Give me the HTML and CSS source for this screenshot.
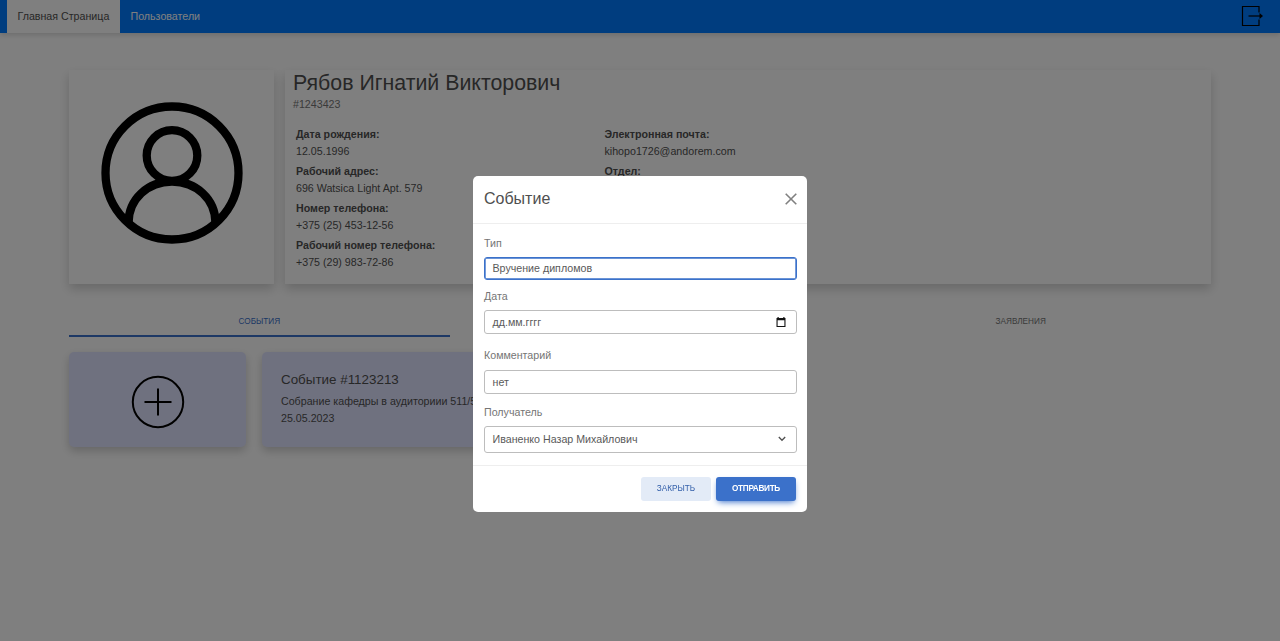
FILE: index.html
```html
<!DOCTYPE html>
<html lang="ru">
<head>
<meta charset="utf-8">
<title>Главная Страница</title>
<link rel="stylesheet" href="styles.css">
</head>
<body>
<header class="navbar">
  <nav class="nav-links">
    <a class="nav-link active">Главная Страница</a>
    <a class="nav-link">Пользователи</a>
  </nav>
  <svg class="logout" viewBox="0 0 22 22" fill="none" stroke="#000" stroke-width="1.2"><path d="M18 7.500V1.500H1.500v19H18V14.500"/><path d="M7.500 11H20"/><path fill="#000" stroke="none" d="M18.500 8 22 11l-3.500 3z"/></svg>
</header>
<main class="page">
  <section class="profile">
    <div class="card avatar-card">
      <svg class="avatar" viewBox="0 0 142 142" fill="none" stroke="#000" stroke-width="8.300"><circle cx="71" cy="71" r="66.500"/><circle cx="71" cy="53.500" r="25.300"/><path d="M27.500 121c0-24 19.500-41.500 43.500-41.500s43.500 17.500 43.500 41.500"/></svg>
    </div>
    <div class="card info-card">
      <h1 class="name">Рябов Игнатий Викторович</h1>
      <div class="number">#1243423</div>
      <div class="details">
        <dl class="fields">
          <dt>Дата рождения:</dt><dd>12.05.1996</dd>
          <dt>Рабочий адрес:</dt><dd>696 Watsica Light Apt. 579</dd>
          <dt>Номер телефона:</dt><dd>+375 (25) 453-12-56</dd>
          <dt>Рабочий номер телефона:</dt><dd>+375 (29) 983-72-86</dd>
        </dl>
        <dl class="fields">
          <dt>Электронная почта:</dt><dd>kihopo1726@andorem.com</dd>
          <dt>Отдел:</dt>
        </dl>
      </div>
    </div>
  </section>
  <div class="tabs">
    <div class="tab selected">СОБЫТИЯ</div>
    <div class="tab"></div>
    <div class="tab">ЗАЯВЛЕНИЯ</div>
  </div>
  <section class="events">
    <div class="event add">
      <svg class="plus" viewBox="0 0 54 54" fill="none" stroke="#000" stroke-width="2"><circle cx="27" cy="27" r="25.200"/><path d="M27 13.500v27M13.500 27h27"/></svg>
    </div>
    <div class="event">
      <h2 class="event-title">Событие #1123213</h2>
      <p class="event-text">Собрание кафедры в аудиториии 511/5</p>
      <p class="event-text">25.05.2023</p>
    </div>
  </section>
</main>
<div class="backdrop">
  <form class="modal">
    <div class="modal-header">
      <h3 class="modal-title">Событие</h3>
      <svg class="close" viewBox="0 0 12 12" stroke="#808080" stroke-width="1.600"><path d="M.7.7l10.600 10.600M11.300.7.7 11.300"/></svg>
    </div>
    <div class="modal-body">
      <label class="label">Тип</label>
      <div class="control focus">Вручение дипломов</div>
      <label class="label second">Дата</label>
      <div class="control date"><span>дд.мм.гггг</span>
        <svg class="calendar" viewBox="0 0 10 10"><path fill="#111" fill-rule="evenodd" d="M1.500 0h1.200v1h4.600V0h1.200v1H9.500v9H.5V1h1zM1.600 3.300v5.600h6.800V3.300z"/></svg>
      </div>
      <label class="label third">Комментарий</label>
      <div class="control comment">нет</div>
      <label class="label fourth">Получатель</label>
      <div class="control select"><span>Иваненко Назар Михайлович</span>
        <svg class="chevron" viewBox="0 0 8 6" fill="none" stroke="#4f4f4f" stroke-width="1.300"><path d="M.8 1 4 4.300 7.200 1"/></svg>
      </div>
    </div>
    <div class="modal-footer">
      <button type="button" class="btn light">ЗАКРЫТЬ</button>
      <button type="button" class="btn primary">ОТПРАВИТЬ</button>
    </div>
  </form>
</div>
</body>
</html>
```
FILE: styles.css
```css
* { box-sizing: border-box; }
body {
  margin: 0;
  height: 641px;
  overflow: hidden;
  background: #fff;
  color: #4f4f4f;
  font: 10.67px/17px "Liberation Sans", Arial, sans-serif;
}
h1, h2, h3, p, dl, dd { margin: 0; font-weight: 400; }
svg { display: block; flex: none; }

.navbar {
  display: flex;
  justify-content: space-between;
  align-items: center;
  height: 33px;
  padding: 0 17px 0 7px;
  background: #007bff;
  box-shadow: 0 2px 5px rgba(0, 0, 0, .15);
}
.nav-links { display: flex; height: 100%; }
.nav-link { display: flex; align-items: center; padding: 0 10.500px; color: #fff; }
.nav-link.active { width: 113px; background: #fff; color: #4f4f4f; white-space: nowrap; }
.logout { width: 22px; height: 22px; margin-bottom: 1px; }

.page { padding: 37px 69px 0; }
.profile { display: flex; gap: 11px; height: 214px; }
.card { background: #fff; box-shadow: 0 5px 10px rgba(0, 0, 0, .18); }
.avatar-card { width: 205px; padding: 31.500px 31.500px; }
.avatar { width: 142px; height: 142px; }
.info-card { flex: 1; padding: 0 8px; }
.name { font-size: 21.330px; line-height: 26px; }
.number { line-height: 16px; color: #757575; }
.details { display: flex; padding: 14px 3px 0; }
.fields { width: 308.500px; }
.fields dt { font-weight: 700; line-height: 17px; }
.fields dd { line-height: 17px; margin-bottom: 3px; }

.tabs { display: flex; height: 53px; }
.tab {
  flex: 1;
  padding-top: 29px;
  border-bottom: 2px solid transparent;
  text-align: center;
  font-size: 8.200px;
  color: #757575;
}
.tab.selected { border-color: #3b71ca; color: #3b71ca; }

.events { display: flex; gap: 16px; padding-top: 15px; }
.event {
  width: 230px;
  height: 95px;
  padding: 19px 19px;
  border-radius: 5px;
  background: #dfe3ff;
  box-shadow: 0 4px 10px rgba(0, 0, 0, .2);
  white-space: nowrap;
}
.event.add { display: flex; justify-content: center; width: 177px; padding-top: 23px; }
.plus { width: 54px; height: 54px; }
.event-title { margin-bottom: 4px; font-size: 13.400px; line-height: 18px; }
.event-text { line-height: 16.500px; }

.backdrop {
  position: fixed;
  inset: 0;
  display: flex;
  justify-content: center;
  align-items: flex-start;
  padding-top: 176px;
  background: rgba(0, 0, 0, .5);
}
.modal { width: 334px; height: 336px; border-radius: 5px; background: #fff; }
.modal-header {
  display: flex;
  justify-content: space-between;
  align-items: center;
  height: 48px;
  padding: 0 10px 1px 11px;
  border-bottom: 1px solid #eee;
}
.modal-title { font-size: 16px; line-height: 24px; }
.close { width: 12px; height: 12px; }
.modal-body { height: 241px; padding: 11px 10px 0 11px; }
.label { display: block; height: 22px; color: #757575; }
.label.second { margin-top: 8px; }
.label.third { margin-top: 13px; height: 23px; }
.label.fourth { margin-top: 10px; }
.control {
  display: flex;
  justify-content: space-between;
  align-items: center;
  height: 24px;
  padding: 0 10px 0 7.500px;
  border: 1px solid #bdbdbd;
  border-radius: 3px;
  color: #5a5a5a;
}
.control.focus {
  height: 23px;
  border-color: #3b71ca;
  box-shadow: inset 0 0 0 .7px #3b71ca;
}
.calendar { width: 10px; height: 10px; }
.select { height: 27px; padding-bottom: 1px; }
.chevron { width: 8px; height: 6px; }
.modal-footer {
  display: flex;
  justify-content: flex-end;
  gap: 5px;
  height: 47px;
  padding: 11px 11px 0;
  border-top: 1px solid #eee;
}
.btn {
  height: 24px;
  padding: 0;
  border: 0;
  border-radius: 3px;
  font: 8.200px/24px "Liberation Sans", Arial, sans-serif;
}
.light { width: 70px; background: #e3ebf7; color: #3561ab; }
.primary {
  width: 80px;
  background: #3b71ca;
  color: #fff;
  font-weight: 700;
  letter-spacing: -.3px;
  box-shadow: 0 3px 6px -2px #3b71ca;
}
```
